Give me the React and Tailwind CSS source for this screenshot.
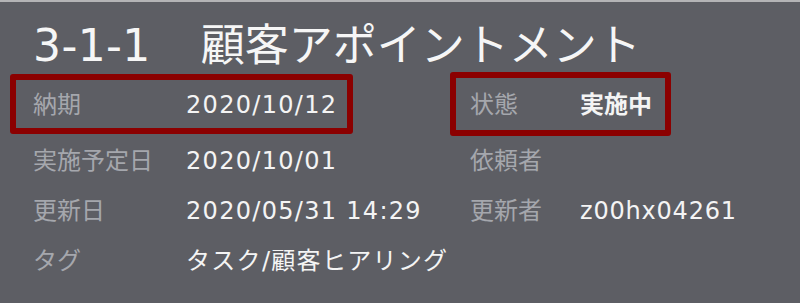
import React from 'react';

const font = { fontFamily: '"DejaVu Sans", "Noto Sans CJK JP", sans-serif' };

const rows = [
  { l: '実施予定日', v: '2020/10/01', rl: '依頼者', rv: '' },
  { l: '更新日', v: '2020/05/31 14:29', rl: '更新者', rv: 'z00hx04261' },
  { l: 'タグ', v: 'タスク/顧客ヒアリング', rl: '', rv: '' },
];

const Left = ({ label, value, boxed }) => (
  <div className={`flex items-center w-[343px] border-[6px] rounded-[3px] pl-[17px] ${boxed ? 'h-[60px] border-[#8b0000] pt-[2px]' : 'h-full border-transparent'}`}>
    <span className="w-[153px] shrink-0 text-[#a5a7ad]">{label}</span>
    <span className="text-[#f4f4f4] whitespace-nowrap tracking-[1.3px]">{value}</span>
  </div>
);

const Right = ({ label, value, boxed, bold }) => (
  <div className={`flex items-center w-[221px] border-[6px] rounded-[3px] pl-[14px] ${boxed ? 'h-[64px] border-[#8b0000] pt-[2px]' : 'h-full border-transparent'}`}>
    <span className="w-[110px] shrink-0 text-[#a5a7ad]">{label}</span>
    <span className={`text-[#f4f4f4] whitespace-nowrap ${bold ? 'font-bold' : 'tracking-[0.8px]'}`}>{value}</span>
  </div>
);

export default function App() {
  return (
    <div className="w-[800px] h-[303px] bg-[#5d5e64] border-t-2 border-[#b4b4b6] overflow-hidden" style={font}>
      <div className="flex items-center h-[44px] mt-[22px] pl-[33px] text-[44px] leading-[44px] text-[#f6f6f6]">
        <span className="tracking-[0.4px]">3-1-1</span>
        <span className="ml-[50px]">顧客アポイントメント</span>
      </div>
      <div className="mt-[4px] text-[24px] leading-none">
        <div className="flex items-center h-[64px] pl-[10px] gap-[97px]">
          <Left label="納期" value="2020/10/12" boxed />
          <Right label="状態" value="実施中" boxed bold />
        </div>
        {rows.map((r) => (
          <div key={r.l} className="flex items-center h-[50px] pl-[10px] gap-[97px]">
            <Left label={r.l} value={r.v} />
            <Right label={r.rl} value={r.rv} />
          </div>
        ))}
      </div>
    </div>
  );
}
